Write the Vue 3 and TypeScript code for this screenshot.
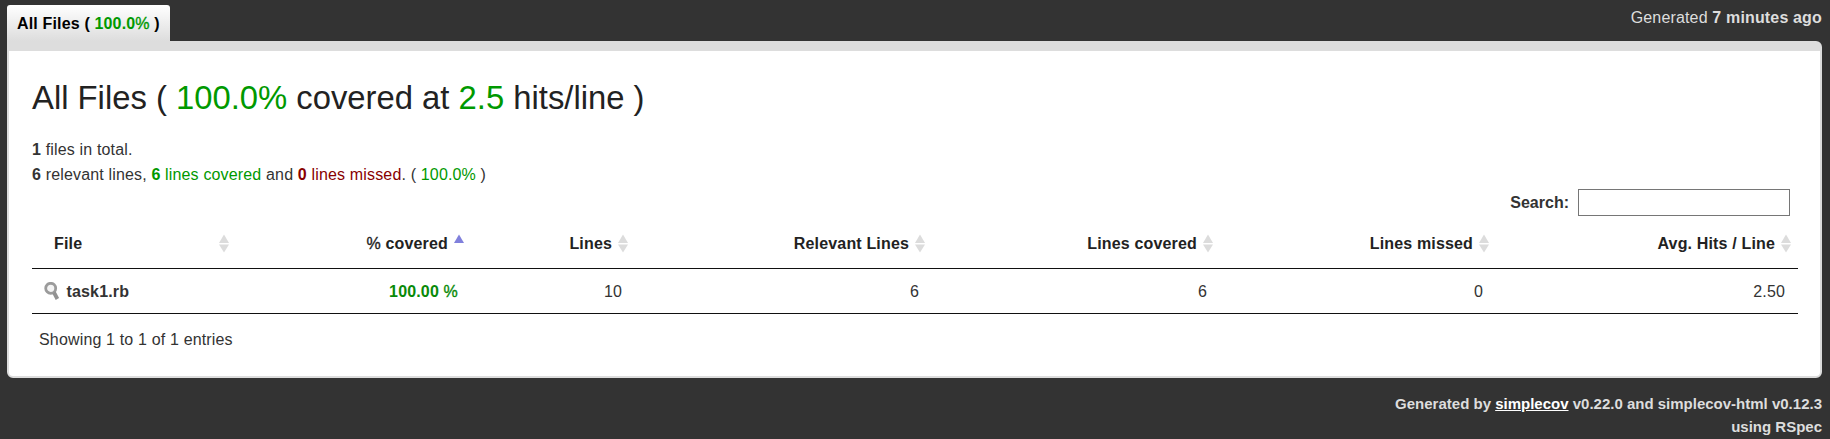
<script setup lang="ts">
import { ref } from 'vue'

interface Column {
  title: string
  percent?: boolean
  sorted?: boolean
}

const columns: Column[] = [
  { title: 'File' },
  { title: 'covered', percent: true, sorted: true },
  { title: 'Lines' },
  { title: 'Relevant Lines' },
  { title: 'Lines covered' },
  { title: 'Lines missed' },
  { title: 'Avg. Hits / Line' },
]

const file = { name: 'task1.rb', coverage: '100.00', values: ['10', '6', '6', '0', '2.50'] }
const query = ref('')
</script>

<template>
  <div class="page">
    <header class="top">
      <a class="tab">All Files ( <span class="green">100.0<span class="pct">%</span></span> )</a>
      <div class="timestamp">Generated <b>7 minutes ago</b></div>
    </header>

    <main class="content">
      <h2>All Files ( <span class="green">100.0%</span> covered at <span class="green">2.5</span> hits/line )</h2>
      <div class="summary"><b>1</b> files in total.</div>
      <div class="summary">
        <b>6</b> relevant lines, <span class="green"><b>6</b> lines covered</span> and
        <span class="red"><b>0</b> lines missed</span>. ( <span class="green">100.0%</span> )
      </div>

      <label class="search">Search: <input v-model="query" type="search" /></label>

      <div class="row head">
        <div v-for="(c, i) in columns" :key="c.title" class="cell" :class="{ first: i === 0 }">
          <span><template v-if="c.percent"><span class="pct">%</span>&nbsp;</template>{{ c.title }}</span>
          <svg class="sort" width="10" height="19" viewBox="0 0 10 19">
            <path v-if="c.sorted" d="M5 0.5L10 9H0Z" fill="#8080dc" />
            <template v-else>
              <path d="M5 0.5L10 9H0Z" fill="#dcdcdc" />
              <path d="M5 18.5L10 10.5H0Z" fill="#dcdcdc" />
            </template>
          </svg>
        </div>
      </div>
      <div class="row body">
        <div class="cell name">
          <svg class="lens" width="16" height="18" viewBox="0 0 16 18">
            <circle cx="6.7" cy="6.3" r="5" fill="#f4f4f4" stroke="#9b9b9b" stroke-width="2.8" />
            <path d="M10 10.5L13.4 17" stroke="#929292" stroke-width="3.8" />
          </svg>
          <b>{{ file.name }}</b>
        </div>
        <div class="cell green"><b>{{ file.coverage }}&nbsp;<span class="pct">%</span></b></div>
        <div v-for="(v, i) in file.values" :key="i" class="cell">{{ v }}</div>
      </div>
      <div class="info">Showing 1 to 1 of 1 entries</div>
    </main>

    <footer>
      Generated by <a>simplecov</a> v0.22.0 and simplecov-html v0.12.3<br />using RSpec
    </footer>
  </div>
</template>

<style>
body {
  background: #333;
}
</style>

<style scoped>
.page {
  box-sizing: border-box;
  height: 439px;
  padding: 5px 8px 0 7px;
  overflow: hidden;
  background: #333;
  font: 16px/25px "Liberation Sans", Arial, sans-serif;
  letter-spacing: 0.16px;
  color: #333;
}
.top {
  display: flex;
  justify-content: space-between;
  height: 36px;
}
.tab {
  box-sizing: border-box;
  width: 163px;
  padding: 6px 0 0 10px;
  border-radius: 3px 3px 0 0;
  background: linear-gradient(#fff, #ddd);
  color: #000;
  font-size: 16px;
  font-weight: bold;
  white-space: nowrap;
}
.timestamp {
  color: #ddd;
}
.content {
  box-sizing: border-box;
  height: 337px;
  padding: 23px 22px 0 23px;
  border: 2px solid #ddd;
  border-top-width: 10px;
  border-radius: 0 6px 6px 6px;
  background: #fff;
}
h2 {
  margin: 0 0 15px;
  color: #222;
  font-size: 32.8px;
  font-weight: normal;
  letter-spacing: 0;
  line-height: 48px;
}
.summary {
  height: 25px;
}
.green {
  color: #090;
}
.body .green {
  color: #088a08;
}
.red {
  color: #800;
}
.pct {
  font-weight: normal;
  -webkit-text-stroke: 0.35px currentColor;
}
.search {
  display: flex;
  justify-content: flex-end;
  align-items: center;
  gap: 9px;
  height: 27px;
  margin: 2px 8px 0 0;
  font-weight: bold;
  letter-spacing: 0;
}
.search input {
  box-sizing: border-box;
  width: 212px;
  height: 27px;
  border: 1px solid #767676;
  border-radius: 0;
  outline: none;
  background: #fff;
  appearance: none;
}
.row {
  display: grid;
  grid-template-columns: 204fr 235fr 164fr 297fr 288fr 276fr 302fr;
  border-bottom: 1px solid #111;
}
.cell {
  display: flex;
  justify-content: flex-end;
  align-items: center;
  padding-right: 13px;
}
.head {
  height: 52px;
  color: #222;
  font-weight: bold;
}
.head .cell {
  gap: 6px;
  padding-top: 2px;
  padding-right: 7px;
}
.head .first {
  justify-content: space-between;
  padding-left: 22px;
}
.body {
  height: 44px;
}
.name {
  justify-content: flex-start;
  gap: 7px;
  padding: 0 0 0 11.5px;
}
.info {
  padding: 13px 0 0 7px;
}
footer {
  padding-top: 14px;
  color: #ddd;
  font-size: 15px;
  font-weight: bold;
  letter-spacing: 0;
  line-height: 23px;
  text-align: right;
}
footer a {
  color: #fff;
  text-decoration: underline;
}
</style>
